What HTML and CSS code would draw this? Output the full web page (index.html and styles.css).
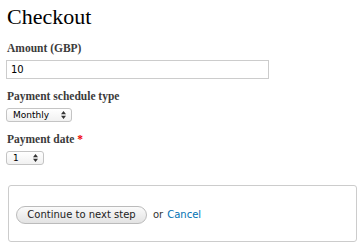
FILE: index.html
```html
<!DOCTYPE html>
<html>
<head>
<meta charset="utf-8">
<link rel="stylesheet" href="styles.css">
</head>
<body>
<div class="page">
  <h1 class="title">Checkout</h1>
  <div class="field">
    <label class="label" for="amount">Amount (GBP)</label>
    <input class="text-input" id="amount" type="text" value="10">
  </div>
  <div class="field">
    <label class="label" for="schedule">Payment schedule type</label>
    <div class="select select-wide"><span>Monthly</span><svg class="arrows" width="5" height="8" viewBox="0 0 5 8"><path d="M0 3.2 L2.5 0 L5 3.2Z M0 4.8 L2.5 8 L5 4.8Z" fill="#333"/></svg></div>
  </div>
  <div class="field">
    <label class="label" for="date">Payment date <span class="req">*</span></label>
    <div class="select select-narrow"><span>1</span><svg class="arrows" width="5" height="8" viewBox="0 0 5 8"><path d="M0 3.2 L2.5 0 L5 3.2Z M0 4.8 L2.5 8 L5 4.8Z" fill="#333"/></svg></div>
  </div>
  <div class="actions">
    <button class="btn" type="button">Continue to next step</button>
    <span class="or">or</span>
    <a class="cancel" href="#">Cancel</a>
  </div>
</div>
</body>
</html>
```
FILE: styles.css
```css
html, body {
  margin: 0;
  padding: 0;
  background: #fff;
}
.page {
  padding: 0 6px 0 6px;
  font-family: "Liberation Serif", Georgia, serif;
  color: #3b3b3b;
}
.title {
  margin: 0;
  padding-top: 3px;
  font-family: "Liberation Serif", Georgia, serif;
  font-weight: normal;
  font-size: 22px;
  line-height: 28px;
  color: #000;
  padding-left: 1px;
  height: 38px;
}
.field {
  display: flex;
  flex-direction: column;
  align-items: flex-start;
  margin-bottom: 10px;
}
.label {
  font-size: 11.5px;
  font-weight: bold;
  line-height: 14px;
  padding-left: 1px;
  margin-bottom: 5px;
}
.req {
  color: #e00;
}
.text-input {
  box-sizing: border-box;
  width: 263px;
  height: 19px;
  margin: 0;
  border: 1px solid #ccc;
  padding: 0 4px;
  font-family: "DejaVu Sans", sans-serif;
  font-size: 10px;
  color: #000;
  outline: none;
}
.select {
  box-sizing: border-box;
  height: 14px;
  display: flex;
  align-items: center;
  justify-content: space-between;
  border: 1px solid #c4c4c4;
  border-radius: 3px;
  background: linear-gradient(#fff, #f1f1f1);
  font-family: "DejaVu Sans", sans-serif;
  font-size: 9px;
  color: #000;
  padding: 0 5px 0 6px;
}
.select-wide { width: 66px; }
.select-narrow { width: 38px; }
.actions {
  box-sizing: border-box;
  margin: 20px 0 0 2px;
  width: 349px;
  height: 57px;
  border: 1px solid #ccc;
  border-radius: 3px;
  display: flex;
  align-items: center;
  padding: 0 0 0 7px;
  font-family: "DejaVu Sans", sans-serif;
  font-size: 10px;
}
.btn {
  box-sizing: border-box;
  height: 18px;
  width: 131px;
  margin: 2px 0 0 0;
  border: 1px solid #bbb;
  border-radius: 9px;
  background: linear-gradient(#fbfbfb, #e3e3e3);
  font-family: "DejaVu Sans", sans-serif;
  font-size: 10px;
  color: #222;
  padding: 0;
}
.or {
  margin: 2px 0 0 6px;
  color: #333;
}
.cancel {
  margin: 2px 0 0 4px;
  color: #0071b3;
  text-decoration: none;
}
```
